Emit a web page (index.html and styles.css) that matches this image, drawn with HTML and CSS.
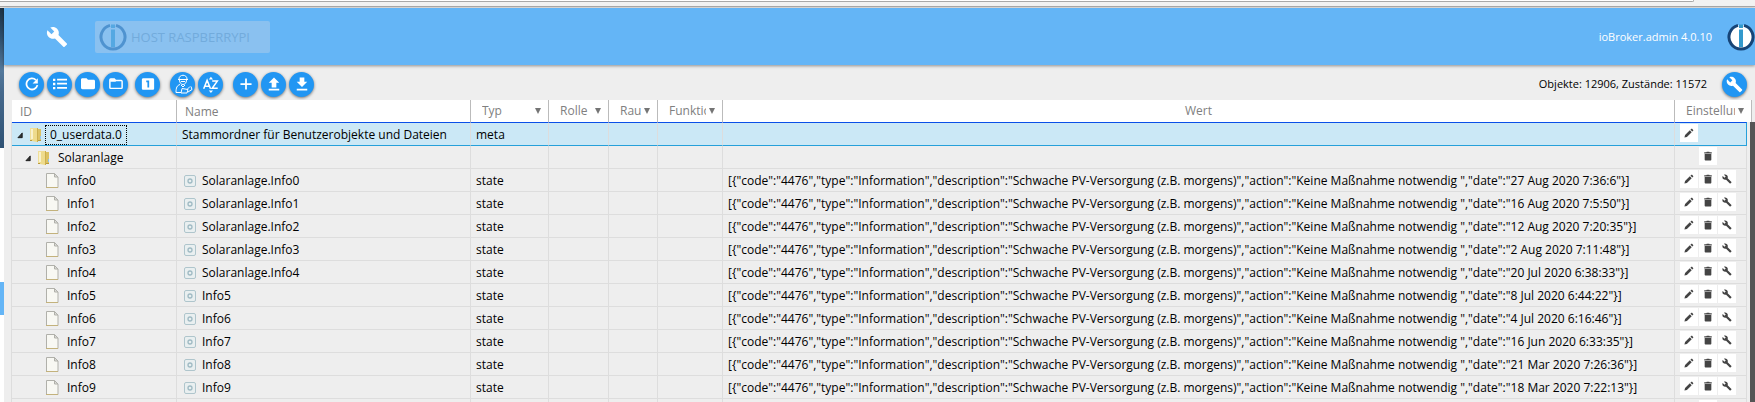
FILE: index.html
```html
<!DOCTYPE html>
<html lang="de">
  <head>
    <meta charset="UTF-8" />
    <meta name="viewport" content="width=device-width, initial-scale=1.0" />
    <title>ioBroker.admin</title>
    <link rel="stylesheet" href="styles.css">
  </head>
  <body>
    <svg class="sprite" aria-hidden="true">
      <symbol id="wrench" viewBox="0 0 24 24">
        <path fill="currentColor" d="M22.7 19l-9.1-9.1c.9-2.3.4-5-1.5-6.9-2-2-5-2.4-7.4-1.3L9 6 6 9 1.6 4.7C.4 7.1.9 10.1 2.9 12.1c1.9 1.9 4.6 2.4 6.9 1.5l9.1 9.1c.4.4 1 .4 1.4 0l2.3-2.3c.5-.4.5-1.1.1-1.4z" />
      </symbol>
      <symbol id="pencil" viewBox="0 0 24 24">
        <path fill="currentColor" d="M1 23l1.5-6L14 5.5l4.5 4.5L7 21.5zM15.5 4l2-2c.6-.6 1.4-.6 2 0l2.5 2.5c.6.6.6 1.4 0 2l-2 2z" />
      </symbol>
      <symbol id="trash" viewBox="0 0 24 24">
        <path fill="currentColor" d="M4 7h16v14c0 1-1 2-2 2H6c-1 0-2-1-2-2zM3 3h5l1-1h6l1 1h5v3H3z" />
      </symbol>
      <symbol id="logo" viewBox="0 0 28 28">
        <circle class="logo-fill" cx="14" cy="14" r="12" />
        <path class="logo-ring" d="M11 2.4a12 12 0 1 0 6 0" />
        <path class="logo-i" d="M12 6.5h4V24h-4zM12 1.5h4V5h-4z" />
      </symbol>
      <symbol id="folder" viewBox="0 0 13 16">
        <path fill="#f0df9a" d="M1 1h6v13H1z" />
        <path fill="#dcc263" d="M6 2h6v12H6z" />
        <path fill="#eedb8c" d="M3 2l5-1v14l-5-1z" />
        <path fill="#f9f2cc" d="M2 2h2v10H2z" />
        <path fill="#cdb04f" d="M8 1h1v14H8z" />
        <path fill="#8fc4e8" d="M11 9h1v3h-1z" />
        <path fill="#b99a3d" d="M1 13h2v1H1zM9 14h3v-1H9z" />
      </symbol>
      <symbol id="page" viewBox="0 0 13 16">
        <path fill="#f8f8f3" stroke="#b0b0aa" d="M.5 .5h8l3.5 3.5v10.5H.5z" />
        <path fill="#dcdcd8" stroke="#b0b0aa" d="M8.5 .5v3.5H12z" />
        <path fill="#c3b27c" d="M0 14h12v1H0z" />
      </symbol>
      <symbol id="state" viewBox="0 0 13 13">
        <rect x=".5" y=".5" width="11" height="11" rx="1.5" fill="#e9eff0" stroke="#afc5cc" />
        <circle cx="6" cy="6" r="2" fill="none" stroke="#9fbac3" stroke-width="1.3" />
      </symbol>
      <symbol id="expander" viewBox="0 0 8 8">
        <path fill="#333" stroke="#000" stroke-width=".8" d="M6 1v5.5H1z" />
      </symbol>
    </svg>

    <div class="browser-bar"><div class="address"></div></div>
    <div class="page">
      <aside class="sidebar"><div class="sidebar-image"></div><div class="sidebar-active"></div></aside>
      <main class="content">
        <header class="header">
          <svg class="header-wrench"><use href="#wrench" /></svg>
          <button class="host" type="button"><svg class="logo"><use href="#logo" /></svg>HOST RASPBERRYPI</button>
          <span class="version">ioBroker.admin 4.0.10</span>
          <svg class="logo"><use href="#logo" /></svg>
        </header>

        <div class="toolbar">
          <div class="group">
            <button class="round" type="button" aria-label="Aktualisieren"><svg viewBox="0 0 24 24"><path d="M18.8 5.2A9.5 9.5 0 1 0 21.3 14" fill="none" stroke="#fff" stroke-width="3" /><path d="M22 2v9h-9z" /></svg></button>
            <button class="round" type="button" aria-label="Liste"><svg viewBox="0 0 24 24"><path d="M0 3h4v4H0zM0 10h4v4H0zM0 17h4v4H0zM7 3h17v3H7zM7 10h17v3H7zM7 17h17v3H7z" /></svg></button>
            <button class="round" type="button" aria-label="Alle zuklappen"><svg viewBox="0 0 24 24"><path d="M9.5 2H2.5C1 2 0 3 0 4.5v14C0 20 1 21 2.5 21h19c1.5 0 2.5-1 2.5-2.5V7c0-1.5-1-2.5-2.5-2.5H12z" /></svg></button>
            <button class="round" type="button" aria-label="Alle aufklappen"><svg viewBox="0 0 24 24"><path d="M9 3.5H3c-.8 0-1.5.7-1.5 1.5v13c0 .8.7 1.5 1.5 1.5h18c.8 0 1.5-.7 1.5-1.5V7.5C22.5 6.7 21.8 6 21 6h-9.5z" fill="none" stroke="#fff" stroke-width="2.5" /><path d="M2 4h7l3 4H2z" /></svg></button>
          </div>
          <div class="group">
            <button class="round" type="button" aria-label="Eine Ebene"><svg viewBox="0 0 24 24"><path fill-rule="evenodd" d="M4 2h16c1.5 0 2.5 1 2.5 2.5v15c0 1.5-1 2.5-2.5 2.5H4c-1.5 0-2.5-1-2.5-2.5v-15C1.5 3 2.5 2 4 2zM9 6v3h2v9h3V6z" /></svg></button>
          </div>
          <div class="group wide">
            <button class="round" type="button" aria-label="Expertenmodus"><svg class="person" viewBox="0 0 20 20"><g fill="none" stroke="#fff"><path d="M6 5c0-5 8-5 8 0M5 5.5h10M6.5 6c0 6 7 6 7 0M8 7.5h4M7 10.5c-3 1-4 3-4 8h5M8 11l2 2 2-2M9 14.5l6 1-1 3.5H8zM14 15.5l3-3M15 18l4-2.5-1-3" /></g></svg></button>
            <button class="round" type="button" aria-label="Sortieren"><svg class="big" viewBox="0 0 20 20"><g fill="none" stroke="#fff" stroke-width="1.8"><path d="M2 15l4-10 4 10M3.5 12h5M12 6h6l-6 8.5h6.5" /></g><path d="M8 4l2.500-3L13 4zM8 17h5l-2.5 3z" /></svg></button>
          </div>
          <div class="group wide">
            <button class="round" type="button" aria-label="Hinzufügen"><svg viewBox="0 0 24 24"><path d="M10.5 2.5h3v8h8v3h-8v8h-3v-8h-8v-3h8z" /></svg></button>
            <button class="round" type="button" aria-label="Hochladen"><svg viewBox="0 0 24 24"><path d="M12 1l9 9h-5v8H8v-8H3zM3 20h18v3H3z" /></svg></button>
            <button class="round" type="button" aria-label="Herunterladen"><svg viewBox="0 0 24 24"><path d="M8 1h8v7h5l-9 9-9-9h5zM3 20h18v3H3z" /></svg></button>
          </div>
          <span class="counts">Objekte: 12906, Zustände: 11572</span>
          <button class="round" type="button" aria-label="Einstellungen"><svg class="big"><use href="#wrench" /></svg></button>
        </div>

        <table class="grid grid-head">
          <colgroup><col class="c-id"><col class="c-name"><col class="c-type"><col class="c-role"><col class="c-room"><col class="c-func"><col><col class="c-set-head"></colgroup>
          <tr>
            <th><input type="text" placeholder="ID" aria-label="ID"></th>
            <th><input type="text" placeholder="Name" aria-label="Name"></th>
            <th><div class="filter"><select aria-label="Typ"><option>Typ</option></select></div></th>
            <th><div class="filter"><select aria-label="Rolle"><option>Rolle</option></select></div></th>
            <th><div class="filter"><select aria-label="Raum"><option>Raum</option></select></div></th>
            <th><div class="filter"><select aria-label="Funktion"><option>Funktion</option></select></div></th>
            <th class="center">Wert</th>
            <th><div class="filter"><select aria-label="Einstellungen"><option>Einstellungen</option></select></div></th>
          </tr>
        </table>

        <div class="scroller">
          <table class="grid grid-body">
            <colgroup><col class="c-id"><col class="c-name"><col class="c-type"><col class="c-role"><col class="c-room"><col class="c-func"><col><col class="c-set"></colgroup>
            <tr class="selected">
              <td><div class="node"><svg class="exp"><use href="#expander" /></svg><svg class="ico"><use href="#folder" /></svg><span class="focus">0_userdata.0</span></div></td>
              <td>Stammordner für Benutzerobjekte und Dateien</td><td>meta</td><td></td><td></td><td></td><td></td>
              <td><div class="actions"><button type="button" aria-label="Bearbeiten"><svg><use href="#pencil" /></svg></button></div></td>
            </tr>
            <tr>
              <td><div class="node level2"><svg class="exp"><use href="#expander" /></svg><svg class="ico"><use href="#folder" /></svg><span>Solaranlage</span></div></td>
              <td></td><td></td><td></td><td></td><td></td><td></td>
              <td><div class="actions only-trash"><button type="button" aria-label="Löschen"><svg><use href="#trash" /></svg></button></div></td>
            </tr>
            <tr>
              <td><div class="node level3"><svg class="ico"><use href="#page" /></svg><span>Info0</span></div></td>
              <td><div class="name"><svg><use href="#state" /></svg>Solaranlage.Info0</div></td><td>state</td><td></td><td></td><td></td>
              <td>[{"code":"4476","type":"Information","description":"Schwache PV-Versorgung (z.B. morgens)","action":"Keine Maßnahme notwendig ","date":"27 Aug 2020 7:36:6"}]</td>
              <td><div class="actions"><button type="button" aria-label="Bearbeiten"><svg><use href="#pencil" /></svg></button><button type="button" aria-label="Löschen"><svg><use href="#trash" /></svg></button><button type="button" aria-label="Konfigurieren"><svg><use href="#wrench" /></svg></button></div></td>
            </tr>
            <tr>
              <td><div class="node level3"><svg class="ico"><use href="#page" /></svg><span>Info1</span></div></td>
              <td><div class="name"><svg><use href="#state" /></svg>Solaranlage.Info1</div></td><td>state</td><td></td><td></td><td></td>
              <td>[{"code":"4476","type":"Information","description":"Schwache PV-Versorgung (z.B. morgens)","action":"Keine Maßnahme notwendig ","date":"16 Aug 2020 7:5:50"}]</td>
              <td><div class="actions"><button type="button" aria-label="Bearbeiten"><svg><use href="#pencil" /></svg></button><button type="button" aria-label="Löschen"><svg><use href="#trash" /></svg></button><button type="button" aria-label="Konfigurieren"><svg><use href="#wrench" /></svg></button></div></td>
            </tr>
            <tr>
              <td><div class="node level3"><svg class="ico"><use href="#page" /></svg><span>Info2</span></div></td>
              <td><div class="name"><svg><use href="#state" /></svg>Solaranlage.Info2</div></td><td>state</td><td></td><td></td><td></td>
              <td>[{"code":"4476","type":"Information","description":"Schwache PV-Versorgung (z.B. morgens)","action":"Keine Maßnahme notwendig ","date":"12 Aug 2020 7:20:35"}]</td>
              <td><div class="actions"><button type="button" aria-label="Bearbeiten"><svg><use href="#pencil" /></svg></button><button type="button" aria-label="Löschen"><svg><use href="#trash" /></svg></button><button type="button" aria-label="Konfigurieren"><svg><use href="#wrench" /></svg></button></div></td>
            </tr>
            <tr>
              <td><div class="node level3"><svg class="ico"><use href="#page" /></svg><span>Info3</span></div></td>
              <td><div class="name"><svg><use href="#state" /></svg>Solaranlage.Info3</div></td><td>state</td><td></td><td></td><td></td>
              <td>[{"code":"4476","type":"Information","description":"Schwache PV-Versorgung (z.B. morgens)","action":"Keine Maßnahme notwendig ","date":"2 Aug 2020 7:11:48"}]</td>
              <td><div class="actions"><button type="button" aria-label="Bearbeiten"><svg><use href="#pencil" /></svg></button><button type="button" aria-label="Löschen"><svg><use href="#trash" /></svg></button><button type="button" aria-label="Konfigurieren"><svg><use href="#wrench" /></svg></button></div></td>
            </tr>
            <tr>
              <td><div class="node level3"><svg class="ico"><use href="#page" /></svg><span>Info4</span></div></td>
              <td><div class="name"><svg><use href="#state" /></svg>Solaranlage.Info4</div></td><td>state</td><td></td><td></td><td></td>
              <td>[{"code":"4476","type":"Information","description":"Schwache PV-Versorgung (z.B. morgens)","action":"Keine Maßnahme notwendig ","date":"20 Jul 2020 6:38:33"}]</td>
              <td><div class="actions"><button type="button" aria-label="Bearbeiten"><svg><use href="#pencil" /></svg></button><button type="button" aria-label="Löschen"><svg><use href="#trash" /></svg></button><button type="button" aria-label="Konfigurieren"><svg><use href="#wrench" /></svg></button></div></td>
            </tr>
            <tr>
              <td><div class="node level3"><svg class="ico"><use href="#page" /></svg><span>Info5</span></div></td>
              <td><div class="name"><svg><use href="#state" /></svg>Info5</div></td><td>state</td><td></td><td></td><td></td>
              <td>[{"code":"4476","type":"Information","description":"Schwache PV-Versorgung (z.B. morgens)","action":"Keine Maßnahme notwendig ","date":"8 Jul 2020 6:44:22"}]</td>
              <td><div class="actions"><button type="button" aria-label="Bearbeiten"><svg><use href="#pencil" /></svg></button><button type="button" aria-label="Löschen"><svg><use href="#trash" /></svg></button><button type="button" aria-label="Konfigurieren"><svg><use href="#wrench" /></svg></button></div></td>
            </tr>
            <tr>
              <td><div class="node level3"><svg class="ico"><use href="#page" /></svg><span>Info6</span></div></td>
              <td><div class="name"><svg><use href="#state" /></svg>Info6</div></td><td>state</td><td></td><td></td><td></td>
              <td>[{"code":"4476","type":"Information","description":"Schwache PV-Versorgung (z.B. morgens)","action":"Keine Maßnahme notwendig ","date":"4 Jul 2020 6:16:46"}]</td>
              <td><div class="actions"><button type="button" aria-label="Bearbeiten"><svg><use href="#pencil" /></svg></button><button type="button" aria-label="Löschen"><svg><use href="#trash" /></svg></button><button type="button" aria-label="Konfigurieren"><svg><use href="#wrench" /></svg></button></div></td>
            </tr>
            <tr>
              <td><div class="node level3"><svg class="ico"><use href="#page" /></svg><span>Info7</span></div></td>
              <td><div class="name"><svg><use href="#state" /></svg>Info7</div></td><td>state</td><td></td><td></td><td></td>
              <td>[{"code":"4476","type":"Information","description":"Schwache PV-Versorgung (z.B. morgens)","action":"Keine Maßnahme notwendig ","date":"16 Jun 2020 6:33:35"}]</td>
              <td><div class="actions"><button type="button" aria-label="Bearbeiten"><svg><use href="#pencil" /></svg></button><button type="button" aria-label="Löschen"><svg><use href="#trash" /></svg></button><button type="button" aria-label="Konfigurieren"><svg><use href="#wrench" /></svg></button></div></td>
            </tr>
            <tr>
              <td><div class="node level3"><svg class="ico"><use href="#page" /></svg><span>Info8</span></div></td>
              <td><div class="name"><svg><use href="#state" /></svg>Info8</div></td><td>state</td><td></td><td></td><td></td>
              <td>[{"code":"4476","type":"Information","description":"Schwache PV-Versorgung (z.B. morgens)","action":"Keine Maßnahme notwendig ","date":"21 Mar 2020 7:26:36"}]</td>
              <td><div class="actions"><button type="button" aria-label="Bearbeiten"><svg><use href="#pencil" /></svg></button><button type="button" aria-label="Löschen"><svg><use href="#trash" /></svg></button><button type="button" aria-label="Konfigurieren"><svg><use href="#wrench" /></svg></button></div></td>
            </tr>
            <tr>
              <td><div class="node level3"><svg class="ico"><use href="#page" /></svg><span>Info9</span></div></td>
              <td><div class="name"><svg><use href="#state" /></svg>Info9</div></td><td>state</td><td></td><td></td><td></td>
              <td>[{"code":"4476","type":"Information","description":"Schwache PV-Versorgung (z.B. morgens)","action":"Keine Maßnahme notwendig ","date":"18 Mar 2020 7:22:13"}]</td>
              <td><div class="actions"><button type="button" aria-label="Bearbeiten"><svg><use href="#pencil" /></svg></button><button type="button" aria-label="Löschen"><svg><use href="#trash" /></svg></button><button type="button" aria-label="Konfigurieren"><svg><use href="#wrench" /></svg></button></div></td>
            </tr>
            <tr>
              <td></td><td></td><td></td><td></td><td></td><td></td><td></td>
              <td><div class="actions only-trash"><button type="button" aria-label="Löschen"><svg><use href="#trash" /></svg></button></div></td>
            </tr>
          </table>
          <div class="scrollbar"></div>
        </div>
      </main>
    </div>
  </body>
</html>
```
FILE: styles.css
```css
* {
  box-sizing: border-box;
}

body {
  display: flex;
  flex-direction: column;
  height: 100vh;
  margin: 0;
  overflow: hidden;
  background-color: #fff;
  color: #000;
  font: 12px/18px "Open Sans", sans-serif;
}

button,
input,
select {
  margin: 0;
  padding: 0;
  border: none;
  font: inherit;
}

svg {
  display: block;
  flex: none;
}

.sprite {
  position: absolute;
  width: 0;
  height: 0;
}

.browser-bar {
  flex: none;
  height: 8px;
  padding-right: 61px;
  background-color: #f2f2f2;
  box-shadow: inset 0 -1px #e6e2de, inset 0 -2px #a9a9a9;
}

.address {
  height: 2px;
  border-bottom: 1px solid #a8a8a8;
  border-right: 1px solid #a8a8a8;
  border-bottom-right-radius: 2px;
  background-color: #fff;
}

.page {
  display: flex;
  flex: 1;
  min-height: 0;
}

.sidebar {
  flex: none;
  width: 4px;
}

.sidebar-image {
  height: 140px;
  margin-bottom: 134px;
  background: linear-gradient(#1d3346, #2d4d6b 20%, #54799c 45%, #46698c 60%, #2f5274);
}

.sidebar-active {
  height: 33px;
  background-color: #64b5f6;
}

.content {
  display: flex;
  flex: 1;
  flex-direction: column;
  min-width: 0;
  background-color: #eee;
}

/* header */
.header {
  display: flex;
  flex: none;
  align-items: center;
  height: 57px;
  padding-left: 42px;
  background-color: #64b5f6;
  box-shadow: 0 1px 3px rgba(0, 0, 0, 0.4);
  color: #fff;
}

.header-wrench {
  width: 22px;
  height: 22px;
  margin-right: 27px;
}

.host {
  display: flex;
  align-items: center;
  gap: 4px;
  height: 32px;
  padding: 0 20px 0 4px;
  border-radius: 2px;
  background-color: #8ac1f0;
  color: #72abdc;
  font-size: 13px;
}

.logo {
  --logo-fill: #fff;
  --logo-ring: #164477;
  --logo-i: #3399cc;
  width: 28px;
  height: 28px;
}

.host .logo {
  --logo-fill: none;
  --logo-ring: #4f93d0;
  --logo-i: #55a8e2;
}

.logo-fill {
  fill: var(--logo-fill);
}

.logo-ring {
  fill: none;
  stroke: var(--logo-ring);
  stroke-width: 3;
}

.logo-i {
  fill: var(--logo-i);
}

.version {
  margin-left: auto;
  margin-right: 15px;
  font-size: 11px;
}

/* toolbar */
.toolbar {
  display: flex;
  flex: none;
  align-items: center;
  height: 35px;
  padding: 3px 8px 0 15px;
}

.group {
  display: flex;
  gap: 3px;
  margin-right: 7px;
}

.group + .group.wide {
  margin-left: 3px;
}

.round {
  display: flex;
  align-items: center;
  justify-content: center;
  width: 25px;
  height: 25px;
  border-radius: 50%;
  background-color: #2196f3;
  box-shadow: 0 1px 3px rgba(0, 0, 0, 0.5);
  color: #fff;
}

.round svg {
  width: 14px;
  height: 14px;
  fill: #fff;
}

.round .big {
  width: 17px;
  height: 17px;
}

.round .person {
  width: 20px;
  height: 20px;
}

.counts {
  margin-left: auto;
  margin-right: 15px;
  font-size: 11px;
}

/* tables */
.grid {
  flex: none;
  table-layout: fixed;
  border-spacing: 0;
}

.grid-head {
  width: calc(100% - 11px);
  margin-left: 8px;
  background-color: #fff;
}

.grid th {
  height: 22px;
  padding: 0 0 0 8px;
  border-right: 1px solid #bbb;
  color: #808080;
  font-weight: normal;
  text-align: left;
}

.grid .center {
  padding: 0;
  text-align: center;
}

.grid th input {
  display: block;
  width: 100%;
  height: 20px;
  background: none;
}

.grid th input::placeholder {
  color: #808080;
}

.filter {
  display: flex;
  align-items: center;
  padding: 0 7px 0 3px;
}

.filter select {
  flex: 1;
  min-width: 0;
  height: 20px;
  appearance: none;
  background: none;
  color: #808080;
}

.filter::after {
  content: "";
  margin-left: 3px;
  border: 3px solid transparent;
  border-top: 6px solid #757575;
  border-bottom: none;
}

.c-id { width: 165px; }
.c-name { width: 294px; }
.c-type { width: 78px; }
.c-role { width: 60px; }
.c-room { width: 49px; }
.c-func { width: 65px; }
.c-set { width: 72px; }
.c-set-head { width: 77px; }

.scroller {
  display: flex;
  flex: 1;
  gap: 3px;
  min-height: 0;
  padding-left: 7px;
  overflow: hidden;
}

.grid-body {
  flex: 1;
  align-self: flex-start;
  width: 0;
  border-left: 1px solid #ddd;
}

.scrollbar {
  flex: none;
  width: 5px;
  background-color: #555;
}

.grid td {
  height: 23px;
  padding: 2px 0 0 5px;
  border-right: 1px solid #ddd;
  border-bottom: 1px solid #ddd;
  white-space: nowrap;
}

.grid td:last-child {
  padding: 0 0 2px 5px;
}

.grid .selected td {
  height: 24px;
  border-top: 1px solid #0a4fe8;
  border-bottom-color: #26a0da;
  background-color: #cbe8f6;
}

.grid .selected td:last-child {
  border-right-color: #26a0da;
}

.node,
.name,
.actions {
  display: flex;
  align-items: center;
}

.level2 {
  padding-left: 8px;
}

.level3 {
  padding-left: 29px;
}

.exp {
  width: 7px;
  height: 7px;
  margin-right: 5px;
}

.ico {
  width: 13px;
  height: 16px;
}

.node span {
  margin-left: 3px;
  padding: 0 5px;
}

.node .focus {
  border: 1px dotted #000;
  padding: 0 4px;
}

.name {
  padding-left: 2px;
}

.name svg {
  width: 13px;
  height: 13px;
  margin-right: 5px;
}

.actions {
  gap: 1px;
}

.actions button {
  display: flex;
  align-items: center;
  justify-content: center;
  width: 18px;
  height: 18px;
  background-color: #fff;
  color: #444;
}

.actions svg {
  width: 10px;
  height: 10px;
}

.only-trash {
  padding-left: 19px;
}
```
